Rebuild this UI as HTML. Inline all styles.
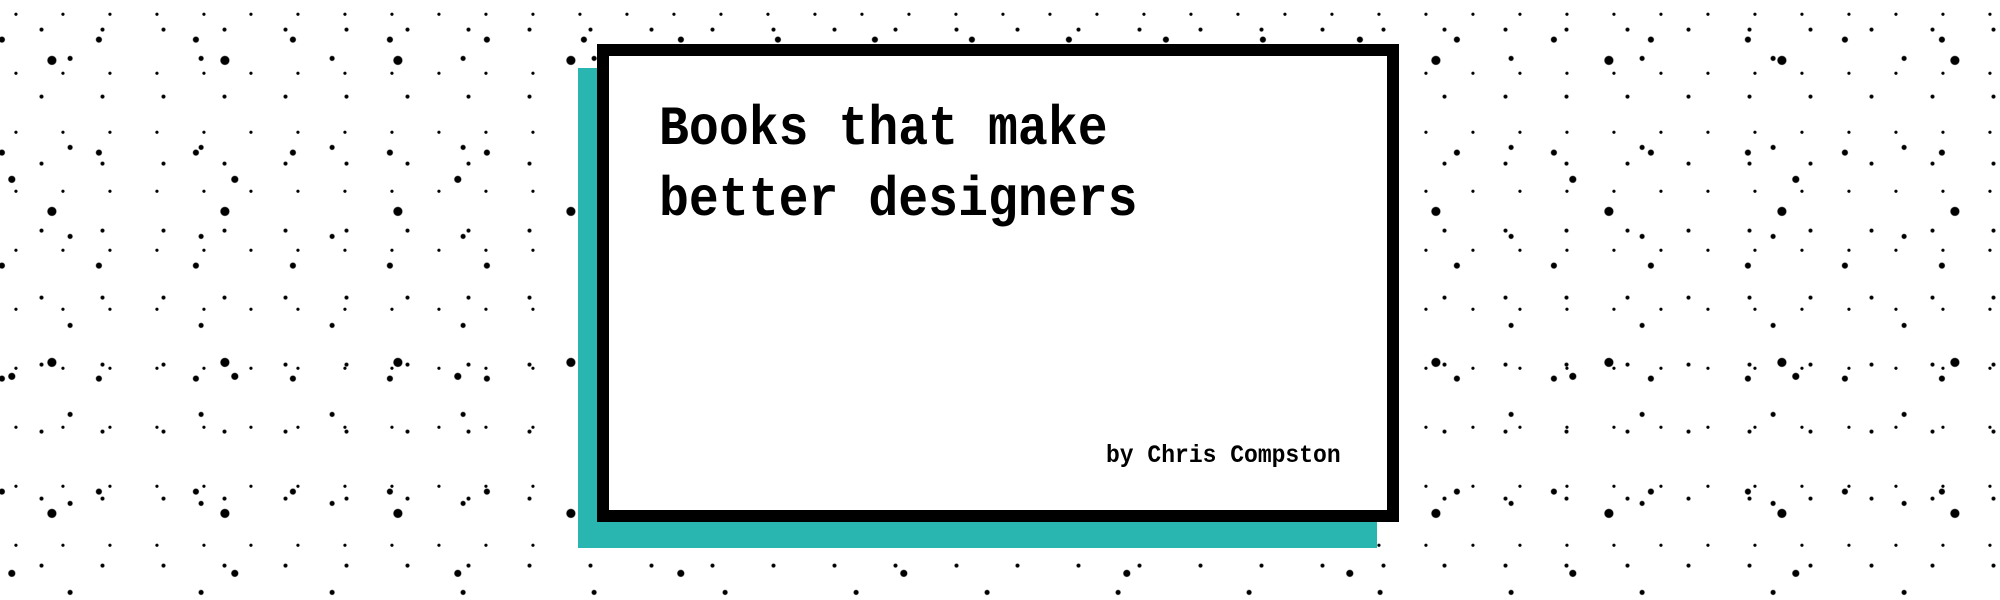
<!DOCTYPE html>
<html><head><meta charset="utf-8"><style>
html,body{margin:0;padding:0}
body{width:2000px;height:600px;overflow:hidden;position:relative;background:#fff;
background-image:
radial-gradient(circle at 30% 40%,#000 0 4px,transparent 5px),
radial-gradient(circle at 70% 20%,#000 0 2.5px,transparent 3.5px),
radial-gradient(circle at 50% 80%,#000 0 1.5px,transparent 2.5px),
radial-gradient(circle at 10% 60%,#000 0 2px,transparent 3px),
radial-gradient(circle at 85% 75%,#000 0 1.2px,transparent 2px),
radial-gradient(circle at 60% 55%,#000 0 3px,transparent 4px);
background-size:173px 151px,97px 113px,61px 67px,131px 89px,47px 59px,223px 197px;
background-position:0 0,31px 17px,11px 43px,57px 5px,23px 29px,101px 71px;}
.teal{position:absolute;left:578px;top:68px;width:799px;height:480px;background:#29b5b0}
.box{position:absolute;left:597px;top:44px;width:778px;height:454px;border:12px solid #000;background:#fff}
.t{position:absolute;font-family:"Liberation Mono",monospace;font-weight:bold;color:#000;white-space:nowrap;transform-origin:0 0}
.h{left:50px;font-size:56px;transform:scaleX(0.89)}
.b{left:497px;top:385px;font-size:25px;transform:scaleX(0.92)}
</style></head><body>
<div class="teal"></div>
<div class="box">
<div class="t h" style="top:41px">Books that make</div>
<div class="t h" style="top:112px">better designers</div>
<div class="t b">by Chris Compston</div>
</div>
</body></html>
